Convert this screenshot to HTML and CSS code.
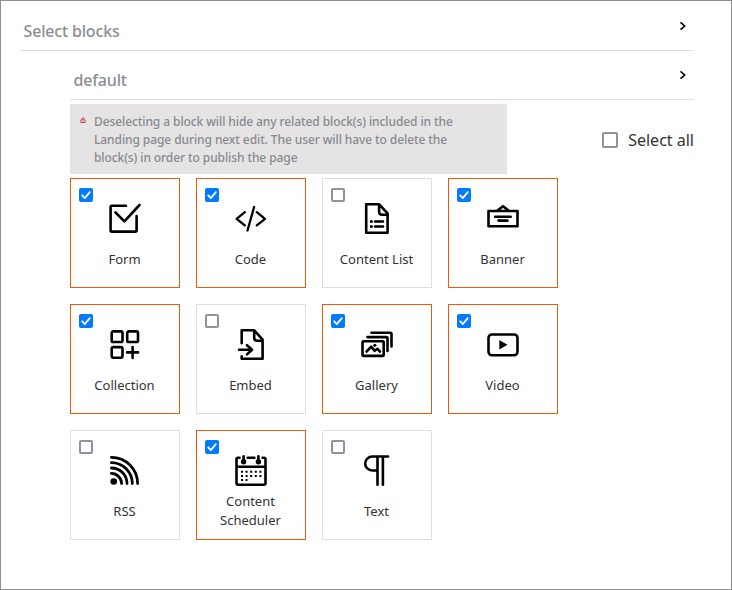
FILE: index.html
```html
<!DOCTYPE html>
<html lang="en">
<head>
<meta charset="utf-8">
<title>Select blocks</title>
<link rel="stylesheet" href="styles.css">
</head>
<body>
<main class="panel">
  <header class="bar">
    <h1 class="title">Select blocks</h1>
    <svg class="chevron" viewBox="0 0 8 10"><path d="M1.5 1.3 5.7 5 1.5 8.7"/></svg>
  </header>
  <section class="group">
    <header class="bar bar-sub">
      <h2 class="title">default</h2>
      <svg class="chevron" viewBox="0 0 8 10"><path d="M1.5 1.3 5.7 5 1.5 8.7"/></svg>
    </header>
    <div class="tools">
      <div class="notice">
        <svg class="warn" viewBox="0 0 6 6"><path d="M2.4 1Q3 .1 3.6 1l1.9 3.6q.2.9-.6.9H1.1q-.8 0-.6-.9zM3 2.2v1.5M3 4.3v.5"/></svg>
        <p class="notice-text">Deselecting a block will hide any related block(s) included in the<br>Landing page during next edit. The user will have to delete the<br>block(s) in order to publish the page</p>
      </div>
      <label class="all"><span class="box box-large"></span><span class="all-text">Select all</span></label>
    </div>
    <div class="grid">
      <div class="card on"><span class="box"><svg viewBox="0 0 14 14"><path d="m3.2 7.3 2.6 2.8 5-6"/></svg></span>
        <svg class="icon" viewBox="0 0 32 32"><path d="M17 2.7H2.9Q1.6 2.7 1.6 4v23.3q0 1.3 1.3 1.3h23.4q1.3 0 1.3-1.3V13M6.5 9.5l8.9 8.9L30.5 2"/></svg>
        <span class="label">Form</span></div>
      <div class="card on"><span class="box"><svg viewBox="0 0 14 14"><path d="m3.2 7.3 2.6 2.8 5-6"/></svg></span>
        <svg class="icon icon-code" viewBox="0 0 32 32"><path d="m9.8 9.2-8.2 6.6 8.2 6.6m12-13.2 8.2 6.6-8.2 6.6M19.1 4l-6.6 23.5"/></svg>
        <span class="label">Code</span></div>
      <div class="card"><span class="box"></span>
        <svg class="icon" viewBox="0 0 32 32"><path d="M5.2 1.3h13l8.4 9v19.4H5.2zM18.1 1.5v7.2q0 3 3 3h5.4M14 18.5h8M14 23.5h8"/><path class="dot" d="M10.3 18.5h.1M10.3 23.5h.1"/></svg>
        <span class="label">Content List</span></div>
      <div class="card on"><span class="box"><svg viewBox="0 0 14 14"><path d="m3.2 7.3 2.6 2.8 5-6"/></svg></span>
        <svg class="icon" viewBox="0 0 32 32"><path d="M1.5 8h29v15.2h-29zM10.5 7.6 16 3.2l5.5 4.4M8.2 13.7h15.5M11.5 17.6h9"/></svg>
        <span class="label">Banner</span></div>

      <div class="card on"><span class="box"><svg viewBox="0 0 14 14"><path d="m3.2 7.3 2.6 2.8 5-6"/></svg></span>
        <svg class="icon" viewBox="0 0 32 32"><rect x="2.7" y="2.4" width="10.8" height="10.6" rx="1.6"/><rect x="18.2" y="2.4" width="10.8" height="10.6" rx="1.6"/><rect x="2.7" y="18.1" width="10.8" height="10.6" rx="1.6"/><path d="M23.6 18v11M18.1 23.4h11"/></svg>
        <span class="label">Collection</span></div>
      <div class="card"><span class="box"></span>
        <svg class="icon" viewBox="0 0 32 32"><path d="M6.7 14.2V1.3h12.5l8.4 9.4v19H6.7v-2.4M19.2 1.5V8.7q0 3 3 3h5.3M4 20.8h12.5M12 16.2l5 4.6-5 4.6"/></svg>
        <span class="label">Embed</span></div>
      <div class="card on"><span class="box"><svg viewBox="0 0 14 14"><path d="m3.2 7.3 2.6 2.8 5-6"/></svg></span>
        <svg class="icon" viewBox="0 0 32 32"><rect x="1.5" y="12.3" width="21.2" height="14.6" rx="1"/><path d="M6.5 8.1h18.7q1.3 0 1.3 1.3V22M10.5 3.8h18.7q1.3 0 1.3 1.3V17.5M5.5 22.6l4.7-5 3.5 4.2 2.8-2 2.5 2.8"/><path class="dot" d="M13.8 16.3h.1"/></svg>
        <span class="label">Gallery</span></div>
      <div class="card on"><span class="box"><svg viewBox="0 0 14 14"><path d="m3.2 7.3 2.6 2.8 5-6"/></svg></span>
        <svg class="icon" viewBox="0 0 32 32"><rect x="1.5" y="5.5" width="29" height="20.8" rx="3.5"/><path class="solid" d="M12.3 11v9.4l8.2-4.7z"/></svg>
        <span class="label">Video</span></div>

      <div class="card"><span class="box"></span>
        <svg class="icon icon-rss" viewBox="0 0 32 32"><path d="M2.4 2.4A26.2 26.2 0 0 1 28.6 28.6M2.4 7.7A20.9 20.9 0 0 1 23.3 28.6M2.4 13A15.6 15.6 0 0 1 18 28.6M2.4 18.4A10.2 10.2 0 0 1 12.6 28.6"/><circle class="solid" cx="4.7" cy="26.5" r="3.3"/></svg>
        <span class="label">RSS</span></div>
      <div class="card on"><span class="box"><svg viewBox="0 0 14 14"><path d="m3.2 7.3 2.6 2.8 5-6"/></svg></span>
        <svg class="icon" viewBox="0 0 32 32"><path d="M4.5 2.8H3Q1.5 2.8 1.5 4.3v23.8q0 1.6 1.6 1.6h25.8q1.6 0 1.6-1.6V4.3q0-1.5-1.5-1.5h-1.5M12.6 2.8h6.8M1.5 11.8h29M8.6 1.3v5M23.4 1.3v5"/><circle class="solid" cx="8.6" cy="6.8" r="2.7"/><circle class="solid" cx="23.4" cy="6.8" r="2.7"/><path class="dots" d="M6 16.7h20.5M6 20.9h20.5M6 25.1h6.5"/></svg>
        <span class="label">Content Scheduler</span></div>
      <div class="card"><span class="box"></span>
        <svg class="icon" viewBox="0 0 32 32"><path d="M27.1 1.5H11.2a7 7 0 0 0 0 14h5.2M16.5 1.5v28.2M21.9 1.5v28.2"/></svg>
        <span class="label">Text</span></div>
    </div>
  </section>
</main>
</body>
</html>
```

FILE: styles.css
```css
* { box-sizing: border-box; }
body { margin: 0; background: #fff; font-family: "Noto Sans", sans-serif; color: #333; }
.panel { height: 590px; border: 1px solid #8e8e93; padding: 9px 37px 0 19px; }
.bar { display: flex; justify-content: space-between; height: 41px; border-bottom: 1px solid #dedee3; padding: 9px 7px 0 3.5px; }
.bar-sub { height: 49px; padding-top: 17px; }
.title { margin: 0; font-size: 16px; line-height: 24px; font-weight: 500; letter-spacing: -.17px; color: #8b8d92; }
.chevron { width: 8px; height: 10px; margin-top: 2px; fill: none; stroke: #000; stroke-width: 1.6; }
.group { margin-left: 50px; }
.tools { display: flex; justify-content: space-between; margin-top: 4px; height: 70px; }
.notice { display: flex; width: 437px; background: #e5e3e4; padding: 9px 10px; }
.warn { width: 6px; height: 6px; margin: 4px 8px 0 0; fill: none; stroke: #c9363e; stroke-width: 1; }
.notice-text { margin: 0; font-size: 12px; line-height: 18px; font-weight: 500; letter-spacing: -.09px; color: #888a8f; white-space: nowrap; }
.all { display: flex; align-items: center; gap: 10px; padding-top: 2px; }
.all-text { font-size: 16px; line-height: 24px; white-space: nowrap; }
.box { display: block; width: 14px; height: 14px; border: 2px solid #918fa0; border-radius: 2px; }
.box-large { width: 16px; height: 16px; }
.grid { display: grid; grid-template-columns: repeat(4, 110px); grid-auto-rows: 110px; gap: 16px; margin-top: 4px; }
.card { display: flex; flex-direction: column; align-items: center; border: 1px solid #dedee3; padding: 9px 8px 0; }
.card .box { align-self: flex-start; }
.card.on { border-color: #ee5a0b; }
.on .box { border: 0; background: #007aff; }
.box svg { display: block; width: 14px; height: 14px; fill: none; stroke: #fff; stroke-width: 1.8; stroke-linecap: round; stroke-linejoin: round; }
.icon { width: 32px; height: 32px; margin-top: 1px; fill: none; stroke: #000; stroke-width: 2.6; stroke-linecap: round; stroke-linejoin: round; }
.icon-rss { stroke-width: 2.8; }
.icon-code { stroke-width: 2.3; }
.icon .solid { fill: #000; stroke: none; }
.icon .dot { stroke-width: 3; }
.icon .dots { stroke-width: 2; stroke-linecap: butt; stroke-dasharray: 2 2.6; }
.label { display: flex; align-items: center; justify-content: center; height: 38px; margin: 5px 1px 0 0; font-size: 13px; line-height: 19px; text-align: center; }
```
